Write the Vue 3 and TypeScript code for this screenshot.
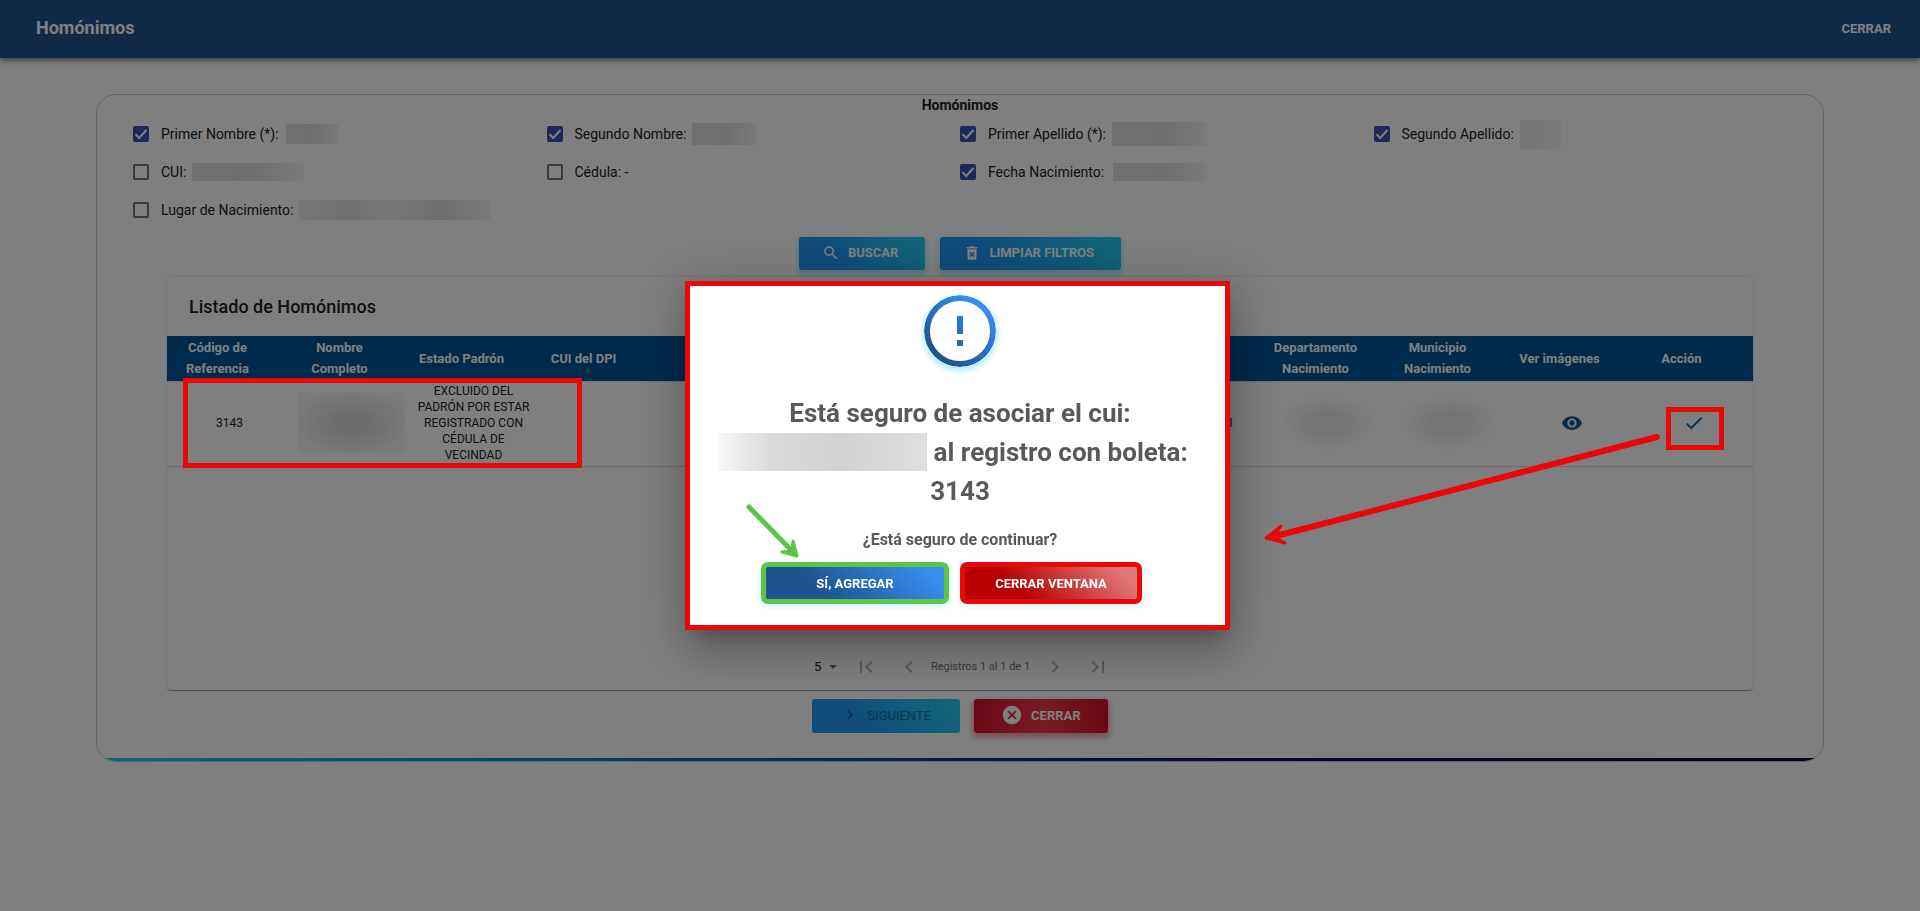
<script setup lang="ts">
import { ref } from 'vue'

interface Filter {
  id: string
  label: string
  checked: boolean
  mask?: string
}

const filters = ref<Filter[]>([
  { id: 'primer-nombre', label: 'Primer Nombre (*):', checked: true, mask: 'mask-a' },
  { id: 'segundo-nombre', label: 'Segundo Nombre:', checked: true, mask: 'mask-b' },
  { id: 'primer-apellido', label: 'Primer Apellido (*):', checked: true, mask: 'mask-c' },
  { id: 'segundo-apellido', label: 'Segundo Apellido:', checked: true, mask: 'mask-d' },
  { id: 'cui', label: 'CUI:', checked: false, mask: 'mask-e' },
  { id: 'cedula', label: 'Cédula: -', checked: false },
  { id: 'fecha', label: 'Fecha Nacimiento:', checked: true, mask: 'mask-f' },
])
const birthplace = ref(false)

const headers: string[] = [
  'Código de Referencia',
  'Nombre Completo',
  'Estado Padrón',
  'CUI del DPI',
  '',
  '',
  '',
  '',
  '',
  'Departamento Nacimiento',
  'Municipio Nacimiento',
  'Ver imágenes',
  'Acción',
]
const pageSize = ref('5')
</script>

<template>
  <div class="page">
    <header class="navbar">
      <h1>Homónimos</h1>
      <button type="button" class="nav-close">CERRAR</button>
    </header>

    <main class="panel">
      <h2 class="panel-title">Homónimos</h2>

      <div class="filters">
        <label v-for="f in filters" :key="f.id" class="filter" :for="f.id">
          <span class="box">
            <input :id="f.id" v-model="f.checked" type="checkbox" />
            <svg viewBox="0 0 16 16"><path d="M2.5 8.2 6.2 12 13.5 4" /></svg>
          </span>
          <span>{{ f.label }}</span>
          <span v-if="f.mask" class="mask" :class="f.mask"></span>
        </label>
        <label class="filter wide" for="lugar">
          <span class="box">
            <input id="lugar" v-model="birthplace" type="checkbox" />
            <svg viewBox="0 0 16 16"><path d="M2.5 8.2 6.2 12 13.5 4" /></svg>
          </span>
          <span>Lugar de Nacimiento:</span>
          <span class="mask mask-g"></span>
        </label>
      </div>

      <div class="actions">
        <button type="button" class="btn btn-blue">
          <svg class="i18" viewBox="0 0 24 24"><path d="M15.5 14h-.79l-.28-.27C15.41 12.59 16 11.11 16 9.5 16 5.91 13.09 3 9.5 3S3 5.91 3 9.5 5.91 16 9.5 16c1.61 0 3.09-.59 4.23-1.57l.27.28v.79l5 4.99L20.49 19l-4.99-5zm-6 0C7.01 14 5 11.99 5 9.5S7.01 5 9.5 5 14 7.01 14 9.5 11.99 14 9.5 14z" /></svg>
          BUSCAR
        </button>
        <button type="button" class="btn btn-blue">
          <svg class="i18" viewBox="0 0 24 24"><path d="M6 19c0 1.1.9 2 2 2h8c1.1 0 2-.9 2-2V7H6v12zm2.46-7.12 1.41-1.41L12 12.59l2.12-2.12 1.41 1.41L13.41 14l2.12 2.12-1.41 1.41L12 15.41l-2.12 2.12-1.41-1.41L10.59 14l-2.13-2.12zM15.5 4l-1-1h-5l-1 1H5v2h14V4z" /></svg>
          LIMPIAR FILTROS
        </button>
      </div>

      <section class="list">
        <h3>Listado de Homónimos</h3>
        <table>
          <thead>
            <tr>
              <th v-for="(h, i) in headers" :key="i" scope="col">{{ h }}</th>
            </tr>
          </thead>
          <tbody>
            <tr>
              <td>3143</td>
              <td><span class="smudge smudge-name"></span></td>
              <td>EXCLUIDO DEL PADRÓN POR ESTAR REGISTRADO CON CÉDULA DE VECINDAD</td>
              <td></td>
              <td></td>
              <td></td>
              <td></td>
              <td></td>
              <td class="tail">1</td>
              <td><span class="smudge"></span></td>
              <td><span class="smudge"></span></td>
              <td>
                <button type="button" class="icon-btn" aria-label="Ver imágenes">
                  <svg class="i22" viewBox="0 0 24 24"><path fill="#1f548f" d="M12 4.5C7 4.5 2.73 7.61 1 12c1.73 4.39 6 7.5 11 7.5s9.27-3.11 11-7.5c-1.73-4.39-6-7.5-11-7.5zM12 17c-2.76 0-5-2.24-5-5s2.24-5 5-5 5 2.24 5 5-2.24 5-5 5zm0-8c-1.66 0-3 1.34-3 3s1.34 3 3 3 3-1.34 3-3-1.34-3-3-3z" /></svg>
                </button>
              </td>
              <td>
                <button type="button" class="icon-btn" aria-label="Asociar">
                  <svg class="i22" viewBox="0 0 24 24"><path fill="#1460a8" d="M9 16.17 4.83 12l-1.42 1.41L9 19 21 7l-1.41-1.41z" /></svg>
                </button>
              </td>
            </tr>
          </tbody>
        </table>
        <div class="empty"></div>
        <nav class="pager" aria-label="Paginación">
          <span class="size">
            <select v-model="pageSize" aria-label="Registros por página">
              <option>5</option>
            </select>
            <svg viewBox="0 0 10 5"><path d="M0 0h10L5 5z" /></svg>
          </span>
          <button type="button" class="page-btn" aria-label="Primera"><svg class="i24" viewBox="0 0 24 24"><path d="M18.41 16.59 13.82 12l4.59-4.59L17 6l-6 6 6 6zM6 6h2v12H6z" /></svg></button>
          <button type="button" class="page-btn" aria-label="Anterior"><svg class="i24" viewBox="0 0 24 24"><path d="M15.41 7.41 14 6l-6 6 6 6 1.41-1.41L10.83 12z" /></svg></button>
          <span class="range">Registros 1 al 1 de 1</span>
          <button type="button" class="page-btn" aria-label="Siguiente"><svg class="i24" viewBox="0 0 24 24"><path d="M10 6 8.59 7.41 13.17 12l-4.58 4.59L10 18l6-6z" /></svg></button>
          <button type="button" class="page-btn" aria-label="Última"><svg class="i24" viewBox="0 0 24 24"><path d="M5.59 7.41 10.18 12l-4.59 4.59L7 18l6-6-6-6zM16 6h2v12h-2z" /></svg></button>
        </nav>
      </section>

      <div class="actions bottom">
        <button type="button" class="btn btn-blue btn-off" disabled>
          <svg class="i18" viewBox="0 0 24 24"><path d="M10 6 8.59 7.41 13.17 12l-4.58 4.59L10 18l6-6z" /></svg>
          SIGUIENTE
        </button>
        <button type="button" class="btn btn-red">
          <svg class="i22" viewBox="0 0 24 24"><path d="M12 2C6.47 2 2 6.47 2 12s4.47 10 10 10 10-4.47 10-10S17.53 2 12 2zm5 13.59L15.59 17 12 13.41 8.41 17 7 15.59 10.59 12 7 8.41 8.41 7 12 10.59 15.59 7 17 8.41 13.41 12 17 15.59z" /></svg>
          CERRAR
        </button>
      </div>
      <div class="strip"></div>
    </main>

    <div class="backdrop">
      <div class="dialog" role="dialog" aria-modal="true" aria-labelledby="dialog-title">
        <svg class="alert" viewBox="0 0 72 72">
          <defs>
            <linearGradient id="ring" gradientUnits="userSpaceOnUse" x1="18" y1="62" x2="58" y2="12">
              <stop offset="0" stop-color="#1f548f" />
              <stop offset="1" stop-color="#378ef0" />
            </linearGradient>
          </defs>
          <circle cx="36" cy="36" r="33" fill="#fff" stroke="url(#ring)" stroke-width="6" />
          <path fill="url(#ring)" d="M33 21h6v18h-6zM33 45h6v6h-6z" />
        </svg>
        <h2 id="dialog-title">
          Está seguro de asociar el cui: <span class="cui-mask"></span> al registro con boleta: 3143
        </h2>
        <p>¿Está seguro de continuar?</p>
        <div class="dialog-actions">
          <button type="button" class="confirm">SÍ, AGREGAR</button>
          <button type="button" class="cancel">CERRAR VENTANA</button>
        </div>
      </div>
    </div>

    <svg class="notes" viewBox="0 0 1920 911" preserveAspectRatio="xMidYMin meet" aria-hidden="true">
      <g fill="none" stroke="#eb0707" stroke-width="5">
        <rect x="185.5" y="380.5" width="394" height="85" />
        <rect x="1668.5" y="409.5" width="53" height="38" />
      </g>
      <g fill="none" stroke-linecap="round" stroke-linejoin="round">
        <path stroke="#eb0707" stroke-width="6" d="M1657 437 1272 537" />
        <path fill="#eb0707" stroke="#eb0707" stroke-width="3" d="M1281 526 1266 538 1285 543 1274 537z" />
        <path stroke="#5cc545" stroke-width="5" d="M749 507 793 552" />
        <path fill="#5cc545" stroke="#5cc545" stroke-width="3" d="M793 541 797 556 782 552 792 551z" />
      </g>
    </svg>
  </div>
</template>

<style>
body {
  margin: 0;
  background: #fff;
}
</style>

<style scoped>
.page {
  min-height: 100vh;
  font-family: Roboto, "Liberation Sans", sans-serif;
  font-size: 14px;
  color: #212121;
}
button {
  font: inherit;
  margin: 0;
  cursor: pointer;
}
svg {
  display: block;
  fill: currentColor;
}
.i18 {
  width: 18px;
  height: 18px;
}
.i22 {
  width: 22px;
  height: 22px;
}
.i24 {
  width: 24px;
  height: 24px;
}
.navbar {
  display: flex;
  align-items: center;
  justify-content: space-between;
  box-sizing: border-box;
  height: 58px;
  padding: 0 29px 2px 36px;
  background: #1f548f;
  color: #fff;
  box-shadow: 0 2px 6px rgba(0, 0, 0, 0.6);
}
.navbar h1 {
  margin: 0;
  font-size: 18px;
  line-height: 24px;
  font-weight: 700;
}
.nav-close {
  border: 0;
  padding: 0;
  background: none;
  color: inherit;
  font-size: 13px;
  font-weight: 700;
}
.panel {
  margin: 36px 5% 0;
  border: 1px solid #c8c8c8;
  border-radius: 20px;
  overflow: hidden;
}
.panel-title {
  margin: 0;
  font-size: 14px;
  line-height: 20px;
  font-weight: 700;
  text-align: center;
}
.filters {
  display: grid;
  grid-template-columns: repeat(4, 1fr);
  grid-auto-rows: 38px;
  padding: 0 36px;
}
.filter {
  display: flex;
  align-items: center;
  white-space: nowrap;
}
.filter.wide {
  grid-column: 1 / -1;
}
.box {
  display: grid;
  margin-right: 12px;
}
.box > * {
  grid-area: 1 / 1;
}
.box input {
  appearance: none;
  width: 16px;
  height: 16px;
  margin: 0;
  border: 2px solid #757575;
  border-radius: 2px;
}
.box input:checked {
  border-color: #3f51b5;
  background: #3f51b5;
}
.box svg {
  width: 16px;
  height: 16px;
  fill: none;
  stroke: none;
  stroke-width: 2;
  pointer-events: none;
}
.box input:checked + svg {
  stroke: #fff;
}
.mask {
  height: 20px;
  background: linear-gradient(90deg, #e2e2e2, #dedede 55%, #f6f6f6);
}
.mask-a {
  width: 53px;
  margin-left: 7px;
}
.mask-b {
  width: 65px;
  height: 22px;
  margin-left: 6px;
}
.mask-c {
  width: 95px;
  height: 24px;
  margin-left: 6px;
}
.mask-d {
  width: 41px;
  height: 29px;
  margin-left: 6px;
  background: linear-gradient(90deg, #eaeaea, #f6f6f6);
}
.mask-e {
  width: 112px;
  height: 18px;
  margin-left: 6px;
}
.mask-f {
  width: 94px;
  height: 18px;
  margin-left: 9px;
}
.mask-g {
  width: 192px;
  margin-left: 6px;
  background: linear-gradient(90deg, #eee, #dedede 28%, #f0f0f0 45%, #dcdcdc 75%, #f6f6f6);
}
.actions {
  display: flex;
  justify-content: center;
  gap: 15px;
  margin: 8px 0 7px;
}
.btn {
  display: flex;
  align-items: center;
  gap: 8px;
  height: 33px;
  padding: 0 27px 2px 23px;
  border: 0;
  border-radius: 3px;
  color: #fff;
  font-size: 13px;
  font-weight: 700;
}
.btn-blue {
  background: linear-gradient(45deg, #2196f3 30%, #21cbf3 90%);
  box-shadow: 0 3px 5px 2px rgba(33, 203, 243, 0.3);
}
.btn-off {
  padding: 0 29px 2px 29px;
  box-shadow: none;
  color: rgba(0, 0, 0, 0.4);
  font-weight: 400;
}
.btn-red {
  padding: 0 27px 2px;
  background: linear-gradient(90deg, #d4102a, #ee384c 50%, #d4102a);
  box-shadow: 0 3px 5px 2px rgba(235, 30, 50, 0.4);
}
.bottom {
  gap: 14px;
  margin: 9px 0 25px;
}
.bottom .btn {
  height: 34px;
}
.list {
  margin: 0 70px;
  border-radius: 4px;
  box-shadow: 0 2px 1px -1px rgba(0, 0, 0, 0.2), 0 1px 1px 0 rgba(0, 0, 0, 0.14), 0 0 1px 1px rgba(0, 0, 0, 0.08);
}
.list h3 {
  margin: 0;
  padding: 0 22px;
  font-size: 18px;
  line-height: 59px;
  font-weight: 500;
}
table {
  width: 100%;
  table-layout: fixed;
  border-collapse: separate;
  border-spacing: 0;
}
th {
  height: 44px;
  padding: 0 26px 1px 5px;
  background: #005499;
  color: #fff;
  font-size: 13px;
  line-height: 21px;
  font-weight: 700;
}
td {
  height: 82px;
  padding: 0 0 2px 3px;
  border-top: 1px solid #e0e0e0;
  border-bottom: 1px solid #d8d8d8;
  font-size: 12px;
  line-height: 16px;
  text-align: center;
}
.tail {
  padding-right: 31px;
  text-align: right;
}
.smudge {
  display: block;
  height: 56px;
  margin: 0 10px;
  background: radial-gradient(ellipse at center, #e8e8e8 20%, rgba(240, 240, 240, 0.6) 50%, transparent 70%);
}
.smudge-name {
  height: 60px;
  margin: 0 6px;
  background: radial-gradient(ellipse at center, #d8d8d8 20%, #ececec 60%, #f6f6f6 75%);
}
.icon-btn,
.page-btn {
  display: inline-block;
  padding: 0;
  border: 0;
  background: none;
  vertical-align: middle;
}
.empty {
  height: 174px;
}
.pager {
  display: flex;
  align-items: center;
  justify-content: center;
  box-sizing: border-box;
  height: 49px;
  padding: 2px 0 0 4px;
  color: #757575;
}
.size {
  display: flex;
  align-items: center;
  gap: 7px;
  margin-right: 17px;
}
.size select {
  appearance: none;
  padding: 0;
  border: 0;
  background: none;
  color: #212121;
  font-family: inherit;
  font-size: 13px;
}
.size svg {
  width: 8px;
  height: 4px;
}
.page-btn {
  color: #b4b4b4;
}
.page-btn:nth-of-type(2) {
  margin: 0 10px 0 19px;
}
.page-btn:nth-of-type(3) {
  margin: 0 19px 0 13px;
}
.range {
  font-size: 11px;
}
.strip {
  height: 3px;
  background: linear-gradient(90deg, #00d4ff, #090979 65%, #020024);
}
.backdrop {
  position: fixed;
  inset: 0;
  z-index: 10;
  display: flex;
  align-items: center;
  justify-content: center;
  background: rgba(0, 0, 0, 0.5);
}
.dialog {
  position: relative;
  box-sizing: border-box;
  width: 540px;
  padding: 14px 25px 26px;
  background: #fff;
  color: #595959;
  text-align: center;
  box-shadow: 0 11px 15px -7px rgba(0, 0, 0, 0.2), 0 24px 38px 3px rgba(0, 0, 0, 0.14), 0 9px 46px 8px rgba(0, 0, 0, 0.2);
}
.dialog::after {
  content: "";
  position: absolute;
  inset: 0 0 0 -5px;
  border: 5px solid #eb0707;
  pointer-events: none;
}
.alert {
  width: 72px;
  height: 72px;
  margin: 0 auto 27px;
  border-radius: 50%;
  box-shadow: 0 3px 5px 2px rgba(33, 203, 243, 0.3);
}
.dialog h2 {
  margin: 0;
  font-size: 26px;
  line-height: 39px;
  font-weight: 700;
}
.cui-mask {
  display: inline-block;
  width: 209px;
  height: 38px;
  margin-left: -14px;
  vertical-align: top;
  background: linear-gradient(90deg, #f8f8f8, #dadada 25%, #d2d2d2 60%, #dfdfdf);
}
.dialog p {
  margin: 17px 0 10px;
  font-size: 16px;
  line-height: 24px;
  font-weight: 700;
}
.dialog-actions {
  display: flex;
  justify-content: center;
  gap: 11px;
  padding-right: 17px;
}
.dialog-actions button {
  height: 42px;
  padding: 0;
  border: 5px solid;
  border-radius: 7px;
  background-origin: padding-box;
  color: #fff;
  font-size: 13px;
  font-weight: 700;
  box-shadow: 0 2px 5px 1px rgba(33, 203, 243, 0.2);
}
.dialog-actions .confirm {
  width: 188px;
  border-color: #5cc545;
  background-image: linear-gradient(45deg, #1f548f 30%, #378ef0 90%);
}
.dialog-actions .cancel {
  width: 182px;
  border-color: #eb0707;
  background-image: linear-gradient(45deg, #b80000 30%, #e07878 90%);
}
.notes {
  position: fixed;
  inset: 0;
  z-index: 20;
  width: 100%;
  height: 100%;
  pointer-events: none;
}
</style>
